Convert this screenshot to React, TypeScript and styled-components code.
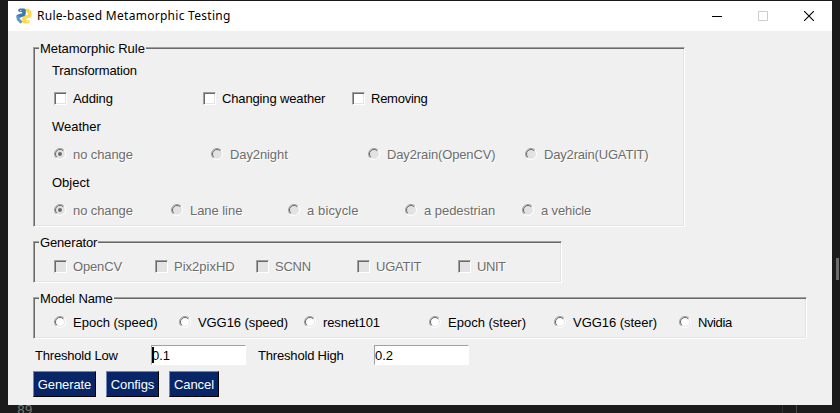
import React from "react";
import styled, { createGlobalStyle, css } from "styled-components";

const GlobalStyle = createGlobalStyle`
  * { box-sizing: border-box; }
  body { margin: 0; background: #1b1b1b; overflow: hidden; }
`;

const Desktop = styled.div`
  position: relative;
  width: 840px;
  height: 413px;
  padding: 1px 8px 0;
  background: #1b1b1b;
  overflow: hidden;
  font-family: "Liberation Sans", Arial, sans-serif;
  font-size: 13px;
  line-height: 16px;
  color: #000;
`;

const Window = styled.main`
  display: flex;
  flex-direction: column;
  width: 824px;
  height: 404px;
  background: #f0f0f0;
`;

const TitleBar = styled.header`
  display: flex;
  align-items: center;
  height: 30px;
  padding-left: 8px;
  background: #fff;
`;

const Title = styled.h1`
  flex: 1;
  margin: 0 0 0 5px;
  font: 400 12px/30px "Noto Sans", sans-serif;
  letter-spacing: 0.28px;
  white-space: nowrap;
`;

const Controls = styled.div`
  display: flex;
  height: 30px;
`;

const ControlButton = styled.button`
  display: flex;
  align-items: center;
  justify-content: center;
  width: 46px;
  height: 30px;
  padding: 0;
  border: 0;
  background: none;
`;

const Body = styled.form`
  display: flex;
  flex-direction: column;
  align-items: flex-start;
  padding: 16px 0 0 25px;
`;

const Frame = styled.section<{ $width: number; $height: number; $pad: number }>`
  position: relative;
  width: ${(p) => p.$width}px;
  height: ${(p) => p.$height}px;
  margin-bottom: 14px;
  padding: ${(p) => p.$pad}px 0 0 17px;
  border: 1px solid;
  border-color: #a0a0a0 #fff #fff #a0a0a0;
  box-shadow: inset 1px 1px #696969, inset -1px -1px #e3e3e3;
`;

const Legend = styled.h2<{ $width: number }>`
  position: absolute;
  top: -8px;
  left: 5px;
  width: ${(p) => p.$width}px;
  height: 16px;
  margin: 0;
  padding-left: 1px;
  background: #f0f0f0;
  font-size: 13px;
  font-weight: 400;
  line-height: 17px;
  white-space: nowrap;
`;

const Spaced = styled.span<{ $spacing?: number }>`
  letter-spacing: ${(p) => p.$spacing ?? 0}px;
  white-space: nowrap;
`;

const RowText = styled(Spaced)`
  padding-top: 2px;
`;

const Row = styled.div`
  display: flex;
  align-items: center;
  height: 28px;
  padding-left: 1px;
`;

const Choice = styled.label<{ $width: number; $disabled?: boolean }>`
  display: flex;
  flex: none;
  align-items: center;
  width: ${(p) => p.$width}px;
  padding-left: 2px;
  ${(p) =>
    p.$disabled &&
    css`
      color: #6d6d6d;
      text-shadow: 1px 1px #fff;
    `}
`;

const CheckBox = styled.span<{ $disabled?: boolean }>`
  width: 13px;
  height: 13px;
  margin: 1px 6px 0 0;
  border: 1px solid;
  border-color: #a0a0a0 #fff #fff #a0a0a0;
  background: ${(p) => (p.$disabled ? "#e3e3e3" : "#fff")};
  box-shadow: inset 1px 1px #696969, inset -1px -1px #e3e3e3;
`;

const RadioIcon = styled.svg`
  width: 12px;
  height: 12px;
  margin-right: 7px;
`;

const Fields = styled.div`
  display: flex;
  align-items: center;
  height: 20px;
  margin-top: -8px;
  padding-left: 2px;
`;

const FieldLabel = styled.label<{ $width: number }>`
  width: ${(p) => p.$width}px;
  padding-top: 1px;
`;

const Input = styled.div<{ $gap?: number }>`
  position: relative;
  width: 95px;
  height: 20px;
  margin-right: ${(p) => p.$gap ?? 0}px;
  padding: 2px 0 0;
  border: 1px solid;
  border-color: #a0a0a0 #fff #fff #a0a0a0;
  background: #fff;
`;

const Caret = styled.i`
  position: absolute;
  top: 1px;
  left: 0;
  width: 2px;
  height: 16px;
  background: #000;
`;

const Buttons = styled.div`
  display: flex;
  gap: 10px;
  margin-top: 6px;
`;

const Button = styled.button<{ $width: number }>`
  width: ${(p) => p.$width}px;
  height: 26px;
  padding: 1px 0 0;
  border: 1px solid;
  border-color: #6d88bd #000 #000 #6d88bd;
  background: #082567;
  color: #fff;
  font: inherit;
  letter-spacing: -0.1px;
  line-height: 22px;
  text-align: center;
  white-space: nowrap;
`;

const EditorLine = styled.span`
  position: absolute;
  top: 403px;
  left: 17px;
  height: 10px;
  overflow: hidden;
  color: #75756f;
  font: 13px/13px "DejaVu Sans Mono", monospace;
`;

const EditorRule = styled.i<{ $left: number; $color: string }>`
  position: absolute;
  top: 405px;
  left: ${(p) => p.$left}px;
  width: 1px;
  height: 8px;
  background: ${(p) => p.$color};
`;

const ScrollThumb = styled.i`
  position: absolute;
  top: 258px;
  right: 1px;
  width: 3px;
  height: 22px;
  background: #6b6b6b;
`;

function PythonLogo() {
  return (
    <svg width="16" height="16" viewBox="0 0 16 16" fill="none" strokeWidth="3.600" strokeLinecap="round" strokeLinejoin="round">
      <path stroke="#ffd84d" d="M12 13.800H8V10.500Q8.300 9 10.500 8.800L13.800 7.500V4.200L11.300 2.300" />
      <path stroke="#3a7ab0" d="M4 2.200H8V5.500Q7.700 7 5.500 7.200L2.200 8.500" />
      <path stroke="#5b9bc9" strokeWidth="3" d="M2.200 9V11.300L4.700 13.800" />
      <circle cx="4.800" cy="2.600" r=".7" fill="#fff" />
      <circle cx="11.200" cy="13.400" r=".7" fill="#fff" />
    </svg>
  );
}

function Radio({ disabled, selected }: { disabled?: boolean; selected?: boolean }) {
  return (
    <RadioIcon viewBox="0 0 12 12" fill="none">
      <circle cx="6" cy="6" r="4.500" fill={disabled ? "#e3e3e3" : "#fff"} />
      <path d="M9.200 2.800A4.500 4.500 0 0 1 2.800 9.200" stroke="#e3e3e3" />
      <path d="M9.900 2.100A5.500 5.500 0 0 1 2.100 9.900" stroke="#fff" />
      <path d="M2.100 9.900A5.500 5.500 0 0 1 9.900 2.100" stroke="#a0a0a0" />
      <path d="M2.800 9.200A4.500 4.500 0 0 1 9.200 2.800" stroke="#696969" />
      {selected && <circle cx="6" cy="6" r="2" fill="#6d6d6d" />}
    </RadioIcon>
  );
}

type Item = [text: string, spacing?: number];

interface ChoicesProps {
  kind: "check" | "radio";
  width: number;
  items: Item[];
  disabled?: boolean;
  selected?: number;
}

function Choices({ kind, width, items, disabled, selected }: ChoicesProps) {
  return (
    <Row>
      {items.map(([text, spacing], i) => (
        <Choice key={text} $width={width} $disabled={disabled}>
          {kind === "check" ? <CheckBox $disabled={disabled} /> : <Radio disabled={disabled} selected={selected === i} />}
          <RowText $spacing={spacing}>{text}</RowText>
        </Choice>
      ))}
    </Row>
  );
}

export default function App() {
  return (
    <Desktop>
      <GlobalStyle />
      <EditorLine>89</EditorLine>
      <EditorRule $left={782} $color="#303030" />
      <EditorRule $left={796} $color="#484848" />
      <ScrollThumb />
      <Window>
        <TitleBar>
          <PythonLogo />
          <Title>Rule-based Metamorphic Testing</Title>
          <Controls>
            <ControlButton aria-label="Minimize">
              <svg width="10" height="10" shapeRendering="crispEdges"><path d="M0 5.500H10" stroke="#000" /></svg>
            </ControlButton>
            <ControlButton aria-label="Maximize" disabled>
              <svg width="10" height="10" fill="none"><path d="M.5 .5H9.500V9.500H.5Z" stroke="#ccc" /></svg>
            </ControlButton>
            <ControlButton aria-label="Close">
              <svg width="10" height="10"><path d="M0 0L10 10M10 0L0 10" stroke="#000" strokeWidth="1.100" /></svg>
            </ControlButton>
          </Controls>
        </TitleBar>
        <Body>
          <Frame $width={652} $height={180} $pad={8}>
            <Legend $width={107}><Spaced $spacing={-0.04}>Metamorphic Rule</Spaced></Legend>
            <Row><RowText $spacing={-0.15}>Transformation</RowText></Row>
            <Choices kind="check" width={149} items={[["Adding", -0.1], ["Changing weather", -0.14], ["Removing", -0.25]]} />
            <Row><RowText>Weather</RowText></Row>
            <Choices kind="radio" width={157} disabled selected={0} items={[["no change", -0.1], ["Day2night", -0.1], ["Day2rain(OpenCV)", -0.13], ["Day2rain(UGATIT)", -0.18]]} />
            <Row><RowText>Object</RowText></Row>
            <Choices kind="radio" width={117} disabled selected={0} items={[["no change", -0.1], ["Lane line", -0.05], ["a bicycle", 0.12], ["a pedestrian", -0.04], ["a vehicle", -0.12]]} />
          </Frame>
          <Frame $width={529} $height={42} $pad={10}>
            <Legend $width={59}><Spaced $spacing={-0.15}>Generator</Spaced></Legend>
            <Choices kind="check" width={101} disabled items={[["OpenCV", -0.16], ["Pix2pixHD"], ["SCNN", -0.25], ["UGATIT", -0.25], ["UNIT", -0.45]]} />
          </Frame>
          <Frame $width={774} $height={42} $pad={10}>
            <Legend $width={75}><Spaced $spacing={-0.1}>Model Name</Spaced></Legend>
            <Choices kind="radio" width={125} items={[["Epoch (speed)"], ["VGG16 (speed)", -0.08], ["resnet101", -0.1], ["Epoch (steer)"], ["VGG16 (steer)", -0.04], ["Nvidia", -0.4]]} />
          </Frame>
          <Fields>
            <FieldLabel $width={116}><Spaced $spacing={-0.19}>Threshold Low</Spaced></FieldLabel>
            <Input $gap={12}>0.1<Caret /></Input>
            <FieldLabel $width={116}><Spaced $spacing={-0.18}>Threshold High</Spaced></FieldLabel>
            <Input>0.2</Input>
          </Fields>
          <Buttons>
            <Button type="button" $width={63}>Generate</Button>
            <Button type="button" $width={53}>Configs</Button>
            <Button type="button" $width={50}>Cancel</Button>
          </Buttons>
        </Body>
      </Window>
    </Desktop>
  );
}
